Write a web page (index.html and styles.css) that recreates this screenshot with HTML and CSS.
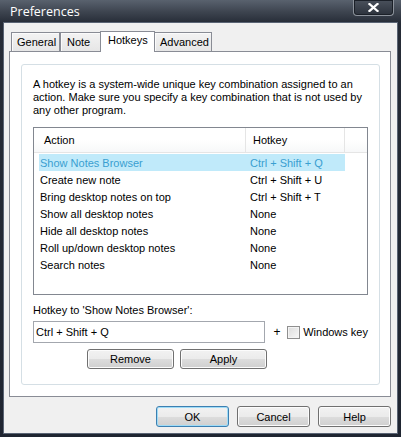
FILE: index.html
```html
<!DOCTYPE html>
<html>
<head>
<meta charset="utf-8">
<link rel="stylesheet" href="styles.css">
</head>
<body>
<div class="window">
  <div class="titlebar">
    <span class="title">Preferences</span>
    <div class="close">
      <svg width="11" height="9" viewBox="0 0 11 9"><path d="M1.5 1 L9.5 8 M9.5 1 L1.5 8" stroke="#fff" stroke-width="2.3" stroke-linecap="square"/></svg>
    </div>
  </div>
  <div class="client">
    <div class="tabs">
      <div class="tab t-general">General</div>
      <div class="tab t-note">Note</div>
      <div class="tab t-hotkeys active">Hotkeys</div>
      <div class="tab t-advanced">Advanced</div>
    </div>
    <div class="panel">
      <div class="group">
        <div class="desc">
          <div class="line">A hotkey is a system-wide unique key combination assigned to an</div>
          <div class="line">action. Make sure you specify a key combination that is not used by</div>
          <div class="line">any other program.</div>
        </div>
        <div class="list">
          <div class="lhead">
            <div class="hc hc1">Action</div>
            <div class="hc hc2">Hotkey</div>
            <div class="hc hc3"></div>
          </div>
          <div class="rows">
            <div class="row sel"><span class="c1">Show Notes Browser</span><span class="c2">Ctrl + Shift + Q</span></div>
            <div class="row"><span class="c1">Create new note</span><span class="c2">Ctrl + Shift + U</span></div>
            <div class="row"><span class="c1">Bring desktop notes on top</span><span class="c2">Ctrl + Shift + T</span></div>
            <div class="row"><span class="c1">Show all desktop notes</span><span class="c2">None</span></div>
            <div class="row"><span class="c1">Hide all desktop notes</span><span class="c2">None</span></div>
            <div class="row"><span class="c1">Roll up/down desktop notes</span><span class="c2">None</span></div>
            <div class="row"><span class="c1">Search notes</span><span class="c2">None</span></div>
          </div>
        </div>
        <div class="label">Hotkey to 'Show Notes Browser':</div>
        <div class="editrow">
          <div class="input">Ctrl + Shift + Q</div>
          <span class="plus">+</span>
          <span class="check"></span>
          <span class="checklabel">Windows key</span>
        </div>
        <div class="btnrow">
          <div class="btn small">Remove</div>
          <div class="btn small">Apply</div>
        </div>
      </div>
    </div>
    <div class="footer">
      <div class="btn big default">OK</div>
      <div class="btn big">Cancel</div>
      <div class="btn big">Help</div>
    </div>
  </div>
</div>
</body>
</html>
```
FILE: styles.css
```css
* { box-sizing: border-box; }
html, body {
  margin: 0;
  padding: 0;
  width: 401px;
  height: 437px;
  overflow: hidden;
  background: #232935;
}
.window {
  width: 401px;
  height: 437px;
  display: flex;
  flex-direction: column;
  background: linear-gradient(#59626e 0px, #3d444f 12px, #262c37 23px, #1f2531 100%);
  font-family: "Liberation Sans", Arial, sans-serif;
  font-size: 11px;
  color: #000;
}
.titlebar {
  height: 23px;
  flex: none;
  display: flex;
  justify-content: space-between;
  align-items: flex-start;
}
.title {
  font-family: "Open Sans", "Noto Sans", sans-serif;
  font-size: 12.5px;
  color: #fff;
  padding-left: 10px;
  line-height: 24px;
}
.close {
  width: 41px;
  height: 16px;
  margin-right: 7px;
  border: 1px solid #8c929b;
  border-top: none;
  border-radius: 0 0 4px 4px;
  background: linear-gradient(#4a515c, #2c323c);
  box-shadow: inset 0 0 0 1px #1b2028;
  display: flex;
  align-items: center;
  justify-content: center;
}
.client {
  flex: 1;
  margin: 0 4px 4px 4px;
  background: #f0f0f0;
  box-shadow: 0 0 0 1px #5a6474;
  display: flex;
  flex-direction: column;
  padding-top: 8px;
}
.tabs {
  height: 20px;
  display: flex;
  align-items: flex-end;
  margin-left: 7px;
  flex: none;
}
.tab {
  height: 19px;
  border: 1px solid #898c95;
  border-bottom: none;
  background: linear-gradient(#f3f3f3, #e6e6e6);
  padding-left: 6px;
  line-height: 18px;
  white-space: nowrap;
  box-shadow: inset 1px 1px 0 #fbfbfb;
}
.t-general { width: 49px; padding-left: 5px; }
.t-note { width: 42px; }
.t-hotkeys { width: 55px; }
.t-advanced { width: 58px; margin-left: -1px; padding-left: 5px; }
.tab.active {
  position: relative;
  z-index: 1;
  height: 21px;
  margin-left: -2px;
  margin-bottom: -1px;
  background: #fff;
  box-shadow: none;
  padding-left: 7px;
  line-height: 17px;
}
.panel {
  margin: 0 6px 0 5px;
  height: 346px;
  flex: none;
  border: 1px solid #898c95;
  background: #fff;
  padding: 12px 10px 11px 11px;
}
.group {
  height: 321px;
  border: 1px solid #d5dfe5;
  border-radius: 3px;
  padding: 13px 11px 0 11px;
}
.desc .line {
  line-height: 13px;
  height: 13px;
  white-space: nowrap;
}
.list {
  margin-top: 10px;
  height: 168px;
  border: 1px solid #828790;
  background: #fff;
}
.lhead {
  display: flex;
  height: 25px;
  border-bottom: 1px solid #e5e5e5;
  background: linear-gradient(#ffffff, #ffffff 50%, #f7f8f9);
}
.hc {
  line-height: 24px;
  white-space: nowrap;
}
.hc1 { width: 212px; padding-left: 10px; border-right: 1px solid #e5e5e5; }
.hc2 { width: 99px; padding-left: 7px; border-right: 1px solid #e5e5e5; }
.hc3 { flex: 1; }
.rows { padding-top: 1px; }
.row {
  display: flex;
  height: 17px;
  line-height: 18px;
  margin-left: 5px;
  width: 306px;
  white-space: nowrap;
}
.row .c1 { width: 211px; padding-left: 1px; }
.row .c2 { flex: 1; }
.row.sel {
  background: #c0eafa;
  color: #3a9fd1;
}
.label {
  margin-top: 9px;
  line-height: 13px;
  height: 13px;
}
.editrow {
  margin-top: 4px;
  display: flex;
  align-items: center;
  height: 22px;
}
.input {
  width: 235px;
  height: 22px;
  border: 1px solid #a3a7ae;
  padding-left: 2px;
  line-height: 20px;
  background: #fff;
}
.plus {
  margin-left: 8px;
  width: 14px;
  font-size: 12px;
}
.check {
  width: 13px;
  height: 13px;
  border: 1px solid #8f8f8f;
  background: linear-gradient(135deg, #dcdcdc, #f8f8f8);
  box-shadow: inset 0 0 0 1px #f4f4f4;
}
.checklabel {
  margin-left: 3px;
  white-space: nowrap;
}
.btnrow {
  margin-top: 6px;
  display: flex;
  gap: 6px;
  padding-left: 54px;
}
.btn {
  border: 1px solid #707070;
  border-radius: 3px;
  background: linear-gradient(#f2f2f2, #ebebeb 50%, #dddddd 50%, #cfcfcf);
  box-shadow: inset 0 0 0 1px #fcfcfc;
  display: flex;
  align-items: center;
  justify-content: center;
  white-space: nowrap;
}
.btn.small { width: 87px; height: 20px; }
.footer {
  margin-top: 9px;
  display: flex;
  justify-content: flex-end;
  gap: 8px;
  padding-right: 6px;
}
.btn.big { width: 73px; height: 21px; }
.btn.default {
  border-color: #3c7fb1;
  box-shadow: inset 0 0 0 1px #9fdcf7;
}
```
